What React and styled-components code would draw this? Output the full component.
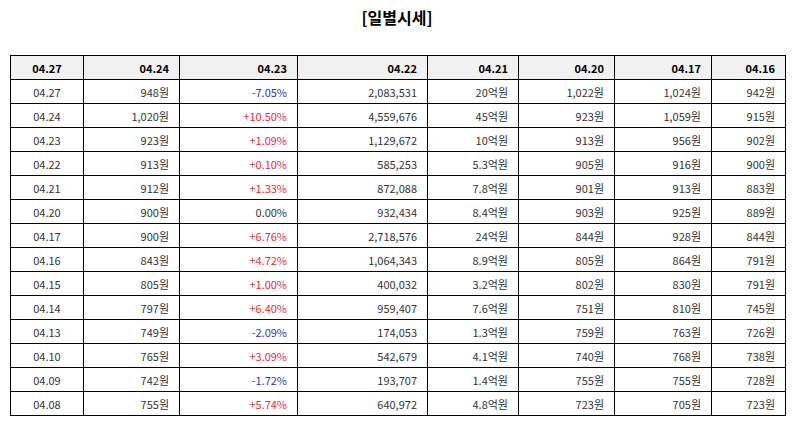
import styled, { createGlobalStyle } from "styled-components";

const GlobalStyle = createGlobalStyle`
  html, body {
    margin: 0;
    padding: 0;
    background: #fff;
  }
  body {
    font-family: "Noto Sans CJK KR", "Noto Sans", sans-serif;
  }
`;

const widths = [73, 96, 118, 130, 91, 96, 97, 74];
const heads = ["04.27", "04.24", "04.23", "04.22", "04.21", "04.20", "04.17", "04.16"];

const rows = [
  ["04.27", "948원", "-7.05%", "2,083,531", "20억원", "1,022원", "1,024원", "942원"],
  ["04.24", "1,020원", "+10.50%", "4,559,676", "45억원", "923원", "1,059원", "915원"],
  ["04.23", "923원", "+1.09%", "1,129,672", "10억원", "913원", "956원", "902원"],
  ["04.22", "913원", "+0.10%", "585,253", "5.3억원", "905원", "916원", "900원"],
  ["04.21", "912원", "+1.33%", "872,088", "7.8억원", "901원", "913원", "883원"],
  ["04.20", "900원", "0.00%", "932,434", "8.4억원", "903원", "925원", "889원"],
  ["04.17", "900원", "+6.76%", "2,718,576", "24억원", "844원", "928원", "844원"],
  ["04.16", "843원", "+4.72%", "1,064,343", "8.9억원", "805원", "864원", "791원"],
  ["04.15", "805원", "+1.00%", "400,032", "3.2억원", "802원", "830원", "791원"],
  ["04.14", "797원", "+6.40%", "959,407", "7.6억원", "751원", "810원", "745원"],
  ["04.13", "749원", "-2.09%", "174,053", "1.3억원", "759원", "763원", "726원"],
  ["04.10", "765원", "+3.09%", "542,679", "4.1억원", "740원", "768원", "738원"],
  ["04.09", "742원", "-1.72%", "193,707", "1.4억원", "755원", "755원", "728원"],
  ["04.08", "755원", "+5.74%", "640,972", "4.8억원", "723원", "705원", "723원"],
];

function toneOf(v) {
  if (v.startsWith("+")) return "up";
  if (v.startsWith("-")) return "down";
  return "flat";
}

export default function App() {
  return (
    <Page>
      <GlobalStyle />
      <Title>[일별시세]</Title>
      <Table>
        <colgroup>
          {widths.map((w, i) => (
            <col key={i} style={{ width: w }} />
          ))}
        </colgroup>
        <thead>
          <tr>
            {heads.map((h, i) => (
              <HeadCell key={h} $first={i === 0}>
                {h}
              </HeadCell>
            ))}
          </tr>
        </thead>
        <tbody>
          {rows.map((r) => (
            <tr key={r[0]}>
              {r.map((v, i) => (
                <Cell key={i} $first={i === 0} $tone={i === 2 ? toneOf(v) : "flat"}>
                  {v}
                </Cell>
              ))}
            </tr>
          ))}
        </tbody>
      </Table>
    </Page>
  );
}

const Page = styled.div`
  padding: 7px 10px 0 10px;
`;

const Title = styled.h2`
  margin: 0 0 28px 0;
  height: 20px;
  line-height: 20px;
  text-align: center;
  font-size: 16px;
  font-weight: 700;
  color: #000;
`;

const Table = styled.table`
  width: 775px;
  table-layout: fixed;
  border-collapse: collapse;
  font-size: 11px;
`;

const HeadCell = styled.th`
  height: 23px;
  padding: 0 10px;
  border: 1px solid #000;
  background: #f1f1f1;
  color: #000;
  font-weight: 700;
  text-align: ${(p) => (p.$first ? "center" : "right")};
`;

const toneColor = {
  up: "#e0303a",
  down: "#3333c4",
  flat: "#333",
};

const Cell = styled.td`
  height: 23px;
  padding: 0 10px;
  border: 1px solid #000;
  color: ${(p) => toneColor[p.$tone]};
  text-align: ${(p) => (p.$first ? "center" : "right")};
  white-space: nowrap;
`;
